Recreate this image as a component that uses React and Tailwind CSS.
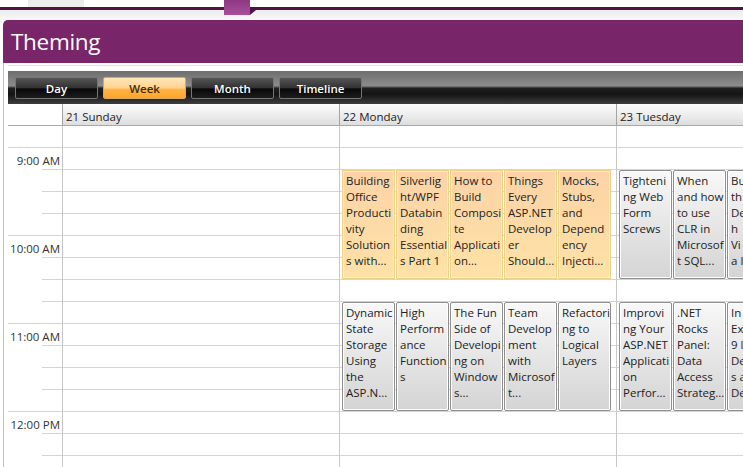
import React from "react";

const mon1 = [
  ["Building", "Office", "Producti", "vity", "Solution", "s with..."],
  ["Silverlig", "ht/WPF", "Databin", "ding", "Essential", "s Part 1"],
  ["How to", "Build", "Composi", "te", "Applicati", "on..."],
  ["Things", "Every", "ASP.NET", "Develop", "er", "Should..."],
  ["Mocks,", "Stubs,", "and", "Depend", "ency", "Injecti..."],
];
const tue1 = [
  ["Tighteni", "ng Web", "Form", "Screws"],
  ["When", "and how", "to use", "CLR in", "Microsof", "t SQL..."],
  ["Bu", "th", "De", "h", "Vi", "a l"],
];
const mon2 = [
  ["Dynamic", "State", "Storage", "Using", "the", "ASP.N..."],
  ["High", "Perform", "ance", "Function", "s"],
  ["The Fun", "Side of", "Developi", "ng on", "Window", "s..."],
  ["Team", "Develop", "ment", "with", "Microsof", "t..."],
  ["Refactori", "ng to", "Logical", "Layers"],
];
const tue2 = [
  ["Improvi", "ng Your", "ASP.NET", "Applicati", "on", "Perfor..."],
  [".NET", "Rocks", "Panel:", "Data", "Access", "Strateg..."],
  ["In", "Ex", "9 l", "De", "s a", "De"],
];

function Appt({ lines, orange }) {
  const cls = orange
    ? "border border-[#efd288] bg-[linear-gradient(to_bottom,#fdd3a7,#fee2a6)] shadow-[inset_0_0_0_1px_rgba(255,255,255,0.45)]"
    : "border border-[#8e8e8e] rounded-[2px] bg-[linear-gradient(to_bottom,#f8f8f8,#d4d4d4)] shadow-[inset_0_0_0_1px_#ffffff]";
  return (
    <div className={"w-[53px] h-[109px] shrink-0 overflow-hidden pl-[3px] pt-[2px] text-[11.5px] leading-[16px] text-[#222] " + cls}>
      {lines.map((l, i) => (
        <div key={i} className="whitespace-nowrap overflow-hidden">
          {l}
        </div>
      ))}
    </div>
  );
}

function ApptGroup({ items, orange, top }) {
  return (
    <div className={"absolute left-[2px] flex gap-[1px] " + top}>
      {items.map((l, i) => (
        <Appt key={i} lines={l} orange={orange} />
      ))}
    </div>
  );
}

const ROWS = 17;

function DayColumn({ children }) {
  return (
    <div className="relative w-[277px] shrink-0 border-l border-[#c8c8c8]">
      {Array.from({ length: ROWS }).map((_, i) => (
        <div key={i} className="h-[22px] border-b border-[#d4d4d4]" />
      ))}
      {children}
    </div>
  );
}

const partial =
  "bg-[linear-gradient(#d4d4d4,#d4d4d4)] bg-no-repeat bg-[position:right_bottom] bg-[size:20px_1px]";

function TimeColumn() {
  const hours = ["9:00 AM", "10:00 AM", "11:00 AM", "12:00 PM"];
  return (
    <div className="w-[54px] shrink-0">
      <div className="h-[22px] border-b border-[#d4d4d4]" />
      {hours.map((h) => (
        <div key={h}>
          <div className={"h-[22px] flex items-center justify-end pr-[2px] pt-[3px] text-[11.5px] text-[#333] " + partial}>
            {h}
          </div>
          <div className={"h-[22px] " + partial} />
          <div className={"h-[22px] " + partial} />
          <div className="h-[22px] border-b border-[#d4d4d4]" />
        </div>
      ))}
    </div>
  );
}

function ToolButton({ label, active }) {
  const cls = active
    ? "border-[#d9a860] text-[#3a2a10] bg-[linear-gradient(to_bottom,#ffe6b8_0%,#ffd291_50%,#ffb547_56%,#ffa52b_100%)]"
    : "border-[#767676] text-white bg-[linear-gradient(to_bottom,#565656_0%,#323232_48%,#080808_55%,#1c1c1c_100%)]";
  return (
    <div className={"w-[83px] h-[22px] rounded-[2px] border flex items-center justify-center pt-[1px] text-[11.5px] font-semibold " + cls}>
      {label}
    </div>
  );
}

function HeaderCell({ label }) {
  return (
    <div className="w-[277px] shrink-0 h-full border-l border-[#a4a4a4] bg-[linear-gradient(to_bottom,#fdfdfd,#dedede)] flex items-center pl-[3px] pt-[4px] text-[11.5px] text-[#222]">
      {label}
    </div>
  );
}

export default function App() {
  return (
    <div className="w-[743px] h-[467px] overflow-hidden bg-white font-['Open_Sans',_'Noto_Sans',_sans-serif]">
      {/* top strip */}
      <div className="relative h-[20px]">
        <div className="h-[7px] flex">
          <div className="ml-[28px] w-[56px] h-full bg-[#ececec]" />
        </div>
        <div className="h-[3px] bg-[#4e1343]" />
        <div className="h-[10px] bg-[linear-gradient(to_bottom,#ececec,#f9f9f9)]" />
        <div className="absolute left-[224px] top-0 w-[26px] h-[15px] bg-[linear-gradient(to_bottom,#913883,#a64e9a)]" />
        <div className="absolute left-[250px] top-[10px] w-0 h-0 border-t-[5px] border-t-[#4e1343] border-r-[6px] border-r-transparent" />
      </div>
      {/* header */}
      <div className="ml-[3px] h-[43px] rounded-tl-[5px] bg-[#78256a] flex items-center pl-[8px] pt-[1px] text-white text-[22.5px] tracking-[-0.3px]">
        Theming
      </div>
      {/* panel */}
      <div className="ml-[3px] border-l border-[#c4c4c4] pt-[8px] pl-[4px] h-[404px] overflow-hidden">
        <div className="border-t border-[#e6dce4] -mt-[6px] mb-[5px]" />
        {/* toolbar */}
        <div className="h-[33px] flex items-start gap-[5px] pt-[6px] pl-[7px] bg-[linear-gradient(to_bottom,#6e6e6e_0%,#8c8c8c_45%,#202020_52%,#141414_70%,#3e3e3e_100%)]">
          <ToolButton label="Day" />
          <ToolButton label="Week" active />
          <ToolButton label="Month" />
          <ToolButton label="Timeline" />
        </div>
        {/* day header */}
        <div className="h-[22px] flex border-b border-[#a8a8a8]">
          <div className="w-[54px] shrink-0" />
          <HeaderCell label="21 Sunday" />
          <HeaderCell label="22 Monday" />
          <HeaderCell label="23 Tuesday" />
        </div>
        {/* body */}
        <div className="flex">
          <TimeColumn />
          <DayColumn />
          <DayColumn>
            <ApptGroup items={mon1} orange top="top-[44px]" />
            <ApptGroup items={mon2} top="top-[176px]" />
          </DayColumn>
          <DayColumn>
            <ApptGroup items={tue1} top="top-[44px]" />
            <ApptGroup items={tue2} top="top-[176px]" />
          </DayColumn>
        </div>
      </div>
    </div>
  );
}
